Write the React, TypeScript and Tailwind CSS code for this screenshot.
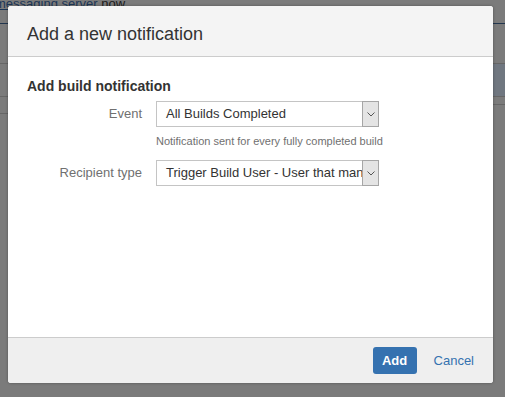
import React from 'react';

const font = "font-['Liberation_Sans',Arial,sans-serif]";

const Chevron: React.FC = () => (
  <svg width="8" height="5" viewBox="0 0 8 5" fill="none">
    <path d="M0.5 0.5 L4 4 L7.5 0.5" stroke="#555" strokeWidth="1" />
  </svg>
);

interface SelectProps {
  value: string;
}

const FakeSelect: React.FC<SelectProps> = ({ value }) => (
  <div className="flex h-[26px] w-[223px] border border-[#c4c4c4] bg-white">
    <div className="flex flex-1 items-center overflow-hidden whitespace-nowrap pl-[9px] text-[13px] text-[#333]">
      {value}
    </div>
    <div className="-my-px -mr-px flex w-[17px] items-center justify-center border border-[#a6a6a6] bg-[#e4e4e4]">
      <Chevron />
    </div>
  </div>
);

export default function App() {
  return (
    <div className={`relative h-[397px] w-[505px] overflow-hidden bg-[#7b7b7b] ${font}`}>
      {/* page behind the overlay */}
      <div className="h-[29px] border-b border-[#22364e]">
        <div className="-ml-[5px] -mt-[5px] text-[13px] leading-[18px]">
          <span className="text-[#1c3657] underline">messaging server</span>{' '}
          <span className="text-[#1a1a1a]">now</span>
        </div>
      </div>
      <div className="h-[40px] border-b border-[#666]" />
      <div className="ml-[300px] h-[32px] bg-[#707780]" />
      <div className="h-[8px] border-t border-[#666]" />
      <div className="ml-[300px] border-t border-[#666]" />
      <div className="mt-[8px] w-[100px] border-t border-[#666]" />

      {/* dialog */}
      <div className="absolute left-[8px] top-[6px] flex h-[377px] w-[485px] flex-col overflow-hidden rounded-[3px] bg-white shadow-[0_0_3px_rgba(0,0,0,0.35)]">
        <div className="h-[51px] border-b border-[#cccccc] bg-[#f4f4f4] px-[19px] pt-[18px]">
          <h2 className="text-[18px] leading-[20px] text-[#333]">Add a new notification</h2>
        </div>

        <div className="flex-1 px-[19px] pt-[19px]">
          <h3 className="text-[14px] font-bold leading-[20px] text-[#333]">Add build notification</h3>

          <div className="mt-[5px] flex items-center">
            <label className="w-[115px] text-right text-[13px] text-[#707070]">Event</label>
            <div className="ml-[14px]">
              <FakeSelect value="All Builds Completed" />
            </div>
          </div>
          <div className="ml-[129px] mt-[7px] text-[11px] leading-[14px] text-[#707070]">
            Notification sent for every fully completed build
          </div>

          <div className="mt-[12px] flex items-center">
            <label className="w-[115px] text-right text-[13px] text-[#707070]">Recipient type</label>
            <div className="ml-[14px]">
              <FakeSelect value="Trigger Build User - User that manually triggered the build" />
            </div>
          </div>
        </div>

        <div className="flex h-[46px] items-center justify-end gap-[17px] border-t border-[#cccccc] bg-[#efefef] pr-[19px]">
          <button className="flex h-[27px] w-[44px] items-center justify-center rounded-[3px] bg-[#3572b0] text-[13px] font-bold text-white">
            Add
          </button>
          <a className="text-[13px] text-[#3572b0]">Cancel</a>
        </div>
      </div>
    </div>
  );
}
